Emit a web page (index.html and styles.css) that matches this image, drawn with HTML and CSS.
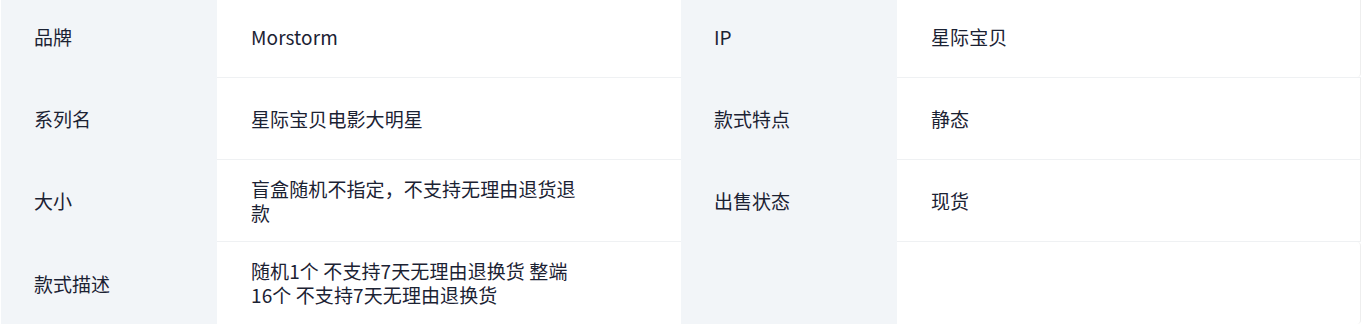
FILE: index.html
```html
<!DOCTYPE html>
<html lang="zh-CN">
<head>
<meta charset="utf-8">
<title>商品参数</title>
<link rel="stylesheet" href="styles.css">
</head>
<body>
<div class="spec">
  <div class="row first">
    <div class="label">品牌</div>
    <div class="value"><span class="text">Morstorm</span></div>
    <div class="label">IP</div>
    <div class="value last"><span class="text">星际宝贝</span></div>
  </div>
  <div class="row">
    <div class="label">系列名</div>
    <div class="value"><span class="text">星际宝贝电影大明星</span></div>
    <div class="label">款式特点</div>
    <div class="value last"><span class="text">静态</span></div>
  </div>
  <div class="row">
    <div class="label">大小</div>
    <div class="value"><span class="text">盲盒随机不指定，不支持无理由退货退款</span></div>
    <div class="label">出售状态</div>
    <div class="value last"><span class="text">现货</span></div>
  </div>
  <div class="row final">
    <div class="label">款式描述</div>
    <div class="value"><span class="text">随机1个 不支持7天无理由退换货 整端16个 不支持7天无理由退换货</span></div>
    <div class="label"></div>
    <div class="value last"><span class="text"></span></div>
  </div>
</div>
</body>
</html>
```

FILE: styles.css
```css
html, body {
  margin: 0;
  padding: 0;
  background: #ffffff;
}

body {
  font-family: "Noto Sans CJK SC", "Noto Sans", sans-serif;
  font-size: 19px;
  line-height: 24px;
  color: #1b2233;
}

.spec {
  width: 1361px;
  padding-left: 1px;
  box-sizing: border-box;
  margin-top: -4px;
}

.row {
  display: grid;
  grid-template-columns: 216px 1fr 216px 1fr;
  height: 82px;
  border-bottom: 1px solid #eff1f3;
  box-sizing: border-box;
}

.row.final {
  border-bottom: none;
}

.label {
  background: #f2f5f8;
  display: flex;
  align-items: center;
  padding: 0 33px;
  margin-bottom: -1px;
}

.value {
  display: flex;
  align-items: center;
  padding: 0 34px;
}

.value .text {
  max-width: 328px;
  letter-spacing: 0.1px;
}

.value.last {
  border-right: 1px solid #eeeeee;
}

.row.first .value.last {
  border-bottom-right-radius: 4px;
}

.row.final .value.last {
  border-top-right-radius: 4px;
  border-bottom-right-radius: 4px;
}
```
